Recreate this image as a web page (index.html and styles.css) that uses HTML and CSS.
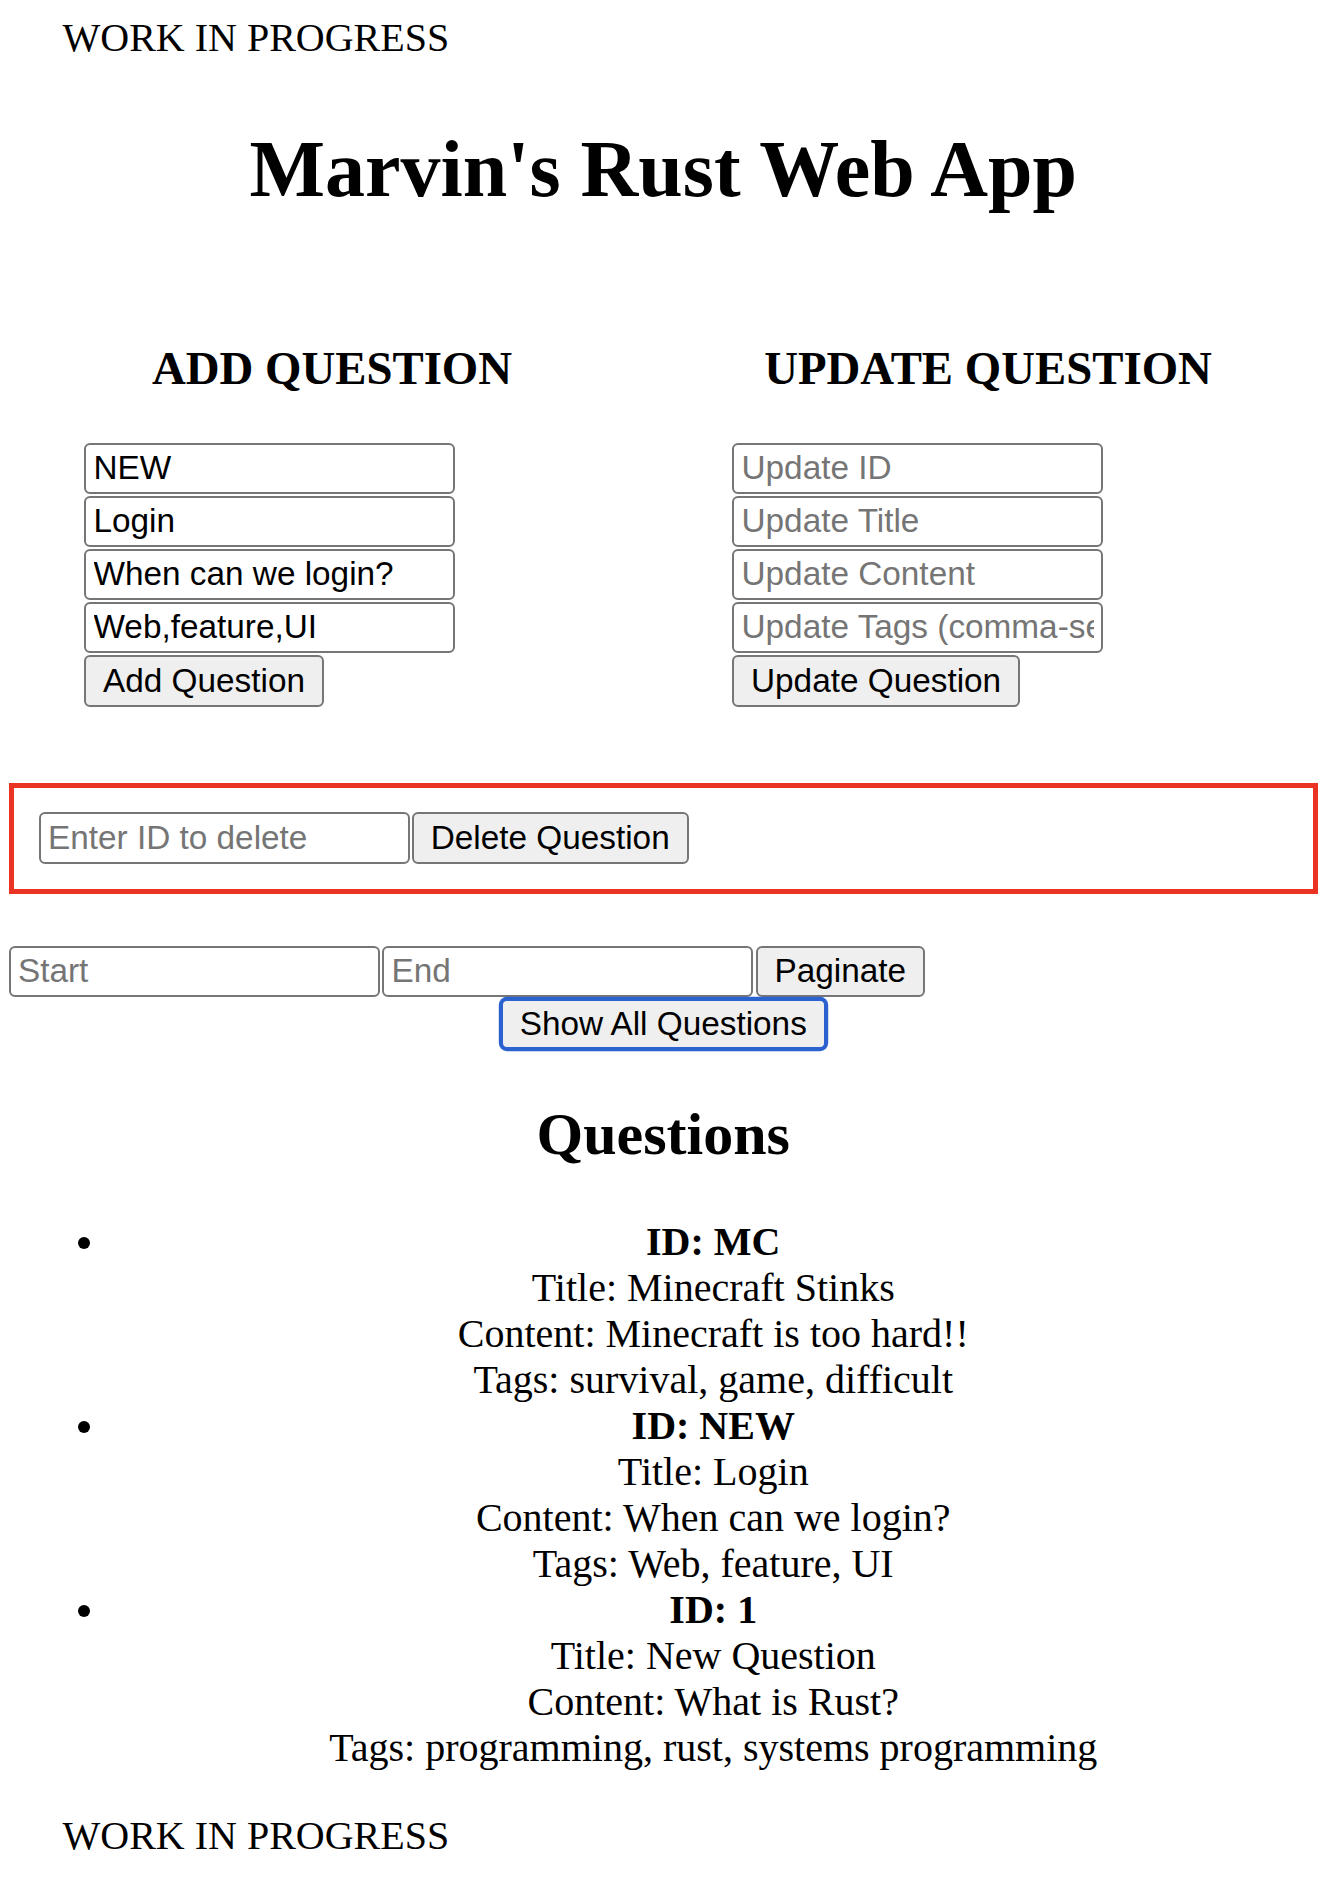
FILE: index.html
```html
<!DOCTYPE html>
<html lang="en">
<head>
<meta charset="utf-8">
<title>Marvin's Rust Web App</title>
<link rel="stylesheet" href="styles.css">
</head>
<body>
  <p class="wip">WORK IN PROGRESS</p>
  <h1 class="title">Marvin's Rust Web App</h1>

  <div class="columns">
    <section class="col col-add">
      <h3 class="col-title">ADD QUESTION</h3>
      <form class="stack">
        <input class="field" type="text" value="NEW" placeholder="ID">
        <input class="field" type="text" value="Login" placeholder="Title">
        <input class="field" type="text" value="When can we login?" placeholder="Content">
        <input class="field" type="text" value="Web,feature,UI" placeholder="Tags (comma-separated)">
        <button class="btn" type="button">Add Question</button>
      </form>
    </section>
    <section class="col col-update">
      <h3 class="col-title">UPDATE QUESTION</h3>
      <form class="stack">
        <input class="field" type="text" placeholder="Update ID">
        <input class="field" type="text" placeholder="Update Title">
        <input class="field" type="text" placeholder="Update Content">
        <input class="field" type="text" placeholder="Update Tags (comma-separated)">
        <button class="btn" type="button">Update Question</button>
      </form>
    </section>
  </div>

  <div class="delete-box">
    <div class="row">
      <input class="field field-row" type="text" placeholder="Enter ID to delete">
      <button class="btn btn-row" type="button">Delete Question</button>
    </div>
  </div>

  <div class="row paginate">
    <input class="field field-page" type="text" placeholder="Start">
    <input class="field field-page" type="text" placeholder="End">
    <button class="btn btn-page" type="button">Paginate</button>
  </div>
  <button class="btn btn-show" type="button">Show All Questions</button>

  <h2 class="list-title">Questions</h2>
  <ul class="questions">
    <li class="question">
      <div class="q-id">ID: MC</div>
      <div class="q-line">Title: Minecraft Stinks</div>
      <div class="q-line">Content: Minecraft is too hard!!</div>
      <div class="q-line">Tags: survival, game, difficult</div>
    </li>
    <li class="question">
      <div class="q-id">ID: NEW</div>
      <div class="q-line">Title: Login</div>
      <div class="q-line">Content: When can we login?</div>
      <div class="q-line">Tags: Web, feature, UI</div>
    </li>
    <li class="question">
      <div class="q-id">ID: 1</div>
      <div class="q-line">Title: New Question</div>
      <div class="q-line">Content: What is Rust?</div>
      <div class="q-line">Tags: programming, rust, systems programming</div>
    </li>
  </ul>
  <p class="wip wip-bottom">WORK IN PROGRESS</p>
</body>
</html>
```

FILE: styles.css
```css
html, body {
  background: #ffffff;
}

body {
  margin: 0;
  padding: 14.5px 10px 30px 8.5px;
  display: flex;
  flex-direction: column;
  font-family: "Liberation Serif", "Times New Roman", serif;
  font-size: 40px;
  color: #000000;
}

.wip {
  margin: 0;
  padding-left: 54px;
  line-height: 46px;
}

.wip-bottom {
  margin-top: 42px;
}

.title {
  margin: 62.5px 0 0;
  font-size: 80px;
  font-weight: bold;
  line-height: 92px;
  text-align: center;
}

.columns {
  margin-top: 125.5px;
  display: grid;
  grid-template-columns: 647px 656px;
  column-gap: 4.5px;
}

.col-title {
  margin: 0;
  font-size: 46.8px;
  font-weight: bold;
  line-height: 54px;
  text-align: center;
}

.stack {
  margin: 48.5px 0 0;
  display: flex;
  flex-direction: column;
  align-items: flex-start;
  gap: 2.5px;
}

.col-add .stack {
  padding-left: 75.5px;
}

.col-update .stack {
  padding-left: 72px;
}

.field {
  box-sizing: border-box;
  width: 371px;
  height: 50.5px;
  margin: 0;
  padding: 0 7.5px;
  border: 2.5px solid #767676;
  border-radius: 6px;
  background: #ffffff;
  font-family: "Liberation Sans", Arial, sans-serif;
  font-size: 33.33px;
  color: #000000;
}

.field::placeholder {
  color: #757575;
}

.btn {
  box-sizing: border-box;
  height: 51.5px;
  margin: 0;
  padding: 0 17px;
  border: 2.5px solid #767676;
  border-radius: 6px;
  background: #efefef;
  font-family: "Liberation Sans", Arial, sans-serif;
  font-size: 33.33px;
  color: #000000;
}

.delete-box {
  margin-top: 76px;
  padding: 24.5px 25px;
  border: 5px solid #ea3323;
}

.row {
  display: flex;
  align-items: flex-start;
  gap: 2.2px;
}

.field-row,
.btn-row {
  height: 52px;
}

.paginate {
  margin-top: 52px;
  gap: 2.5px;
}

.field-page,
.btn-page {
  height: 51.6px;
}

.btn-show {
  align-self: center;
  margin-top: 1.2px;
  height: 51.5px;
  border-color: #2b62cf;
  border-width: 3px;
  border-radius: 7px;
  box-shadow: 0 0 0 1.2px #2b62cf;
}

.list-title {
  margin: 50.5px 0 0;
  font-size: 60px;
  font-weight: bold;
  line-height: 69px;
  text-align: center;
}

.questions {
  margin: 49.5px 0 0;
  padding-left: 100px;
  list-style: disc outside;
}

.question {
  text-align: center;
  line-height: 46px;
}

.q-id {
  font-weight: bold;
}
```
